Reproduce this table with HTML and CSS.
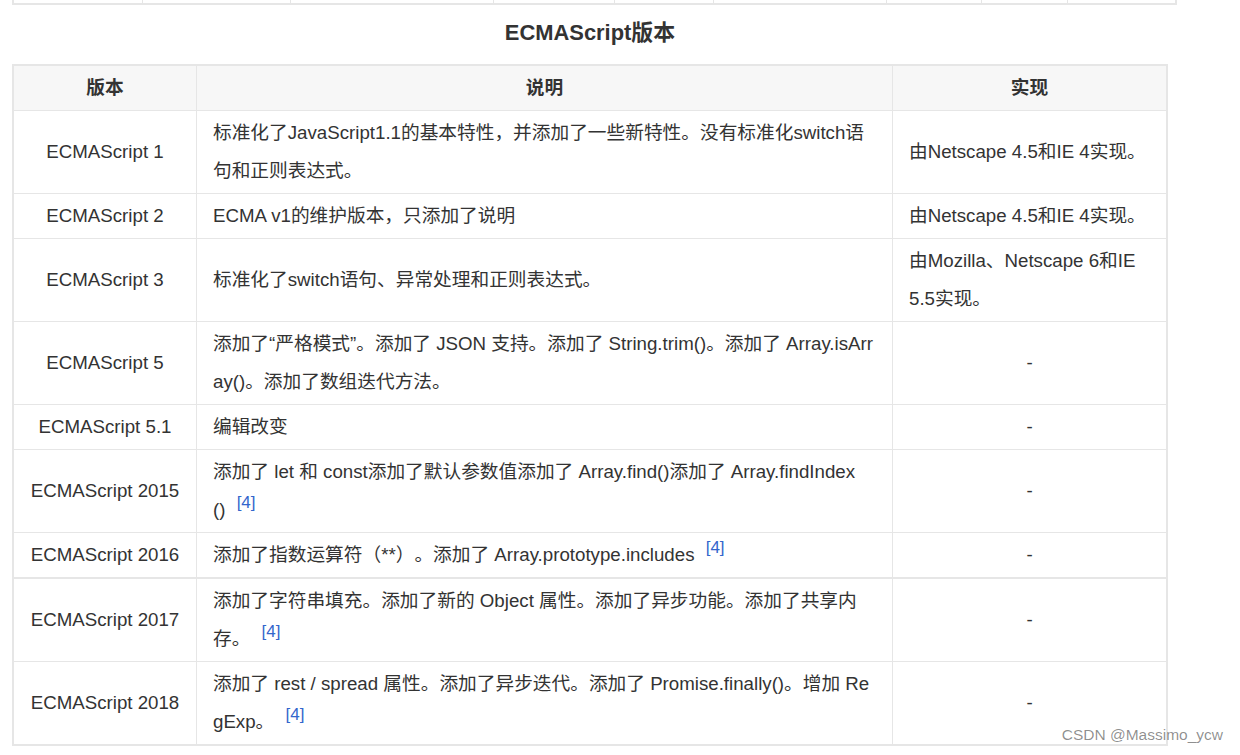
FILE: index.html
```html
<!DOCTYPE html>
<html lang="zh-CN">
<head>
<meta charset="utf-8">
<title>ECMAScript版本</title>
<link rel="stylesheet" href="styles.css">
</head>
<body>
<div class="prev-table"><span></span><span></span><span></span><span></span><span></span><span></span><span></span><span></span><span></span></div>
<h2 class="caption">ECMAScript版本</h2>
<table class="versions">
  <thead>
    <tr><th class="col-ver">版本</th><th class="col-desc">说明</th><th class="col-impl">实现</th></tr>
  </thead>
  <tbody>
    <tr><td class="ver">ECMAScript 1</td><td class="desc">标准化了JavaScript1.1的基本特性，并添加了一些新特性。没有标准化switch语句和正则表达式。</td><td class="impl">由Netscape 4.5和IE 4实现。</td></tr>
    <tr><td class="ver">ECMAScript 2</td><td class="desc">ECMA v1的维护版本，只添加了说明</td><td class="impl">由Netscape 4.5和IE 4实现。</td></tr>
    <tr><td class="ver">ECMAScript 3</td><td class="desc">标准化了switch语句、异常处理和正则表达式。</td><td class="impl">由Mozilla、Netscape 6和IE 5.5实现。</td></tr>
    <tr><td class="ver">ECMAScript 5</td><td class="desc">添加了“严格模式”。添加了 JSON 支持。添加了 String.trim()。添加了 Array.isArray()。添加了数组迭代方法。</td><td class="impl none">-</td></tr>
    <tr><td class="ver">ECMAScript 5.1</td><td class="desc">编辑改变</td><td class="impl none">-</td></tr>
    <tr><td class="ver">ECMAScript 2015</td><td class="desc">添加了 let 和 const添加了默认参数值添加了 Array.find()添加了 Array.findIndex()&nbsp;<sup class="ref">[4]</sup></td><td class="impl none">-</td></tr>
    <tr class="thick"><td class="ver">ECMAScript 2016</td><td class="desc">添加了指数运算符（**）。添加了 Array.prototype.includes&nbsp;<sup class="ref">[4]</sup></td><td class="impl none">-</td></tr>
    <tr><td class="ver">ECMAScript 2017</td><td class="desc">添加了字符串填充。添加了新的 Object 属性。添加了异步功能。添加了共享内存。&nbsp;<sup class="ref">[4]</sup></td><td class="impl none">-</td></tr>
    <tr><td class="ver">ECMAScript 2018</td><td class="desc">添加了 rest / spread 属性。添加了异步迭代。添加了 Promise.finally()。增加 RegExp。&nbsp;<sup class="ref">[4]</sup></td><td class="impl none">-</td></tr>
  </tbody>
</table>
<div class="watermark">CSDN @Massimo_ycw</div>
</body>
</html>
```

FILE: styles.css
```css
* {
  box-sizing: border-box;
}

html, body {
  margin: 0;
  background: #ffffff;
}

body {
  position: relative;
  color: #333333;
  font-family: "Liberation Sans", "Noto Sans CJK SC", sans-serif;
  font-size: 18.7px;
  text-spacing-trim: space-all;
}

.prev-table {
  display: grid;
  grid-template-columns: 129px 148px 203px 121px 99px 173px 95px 86px 107px;
  width: 1165px;
  height: 5px;
  margin-left: 12px;
  border: 2px solid #e6e6e6;
  border-top: 0;
}

.prev-table span {
  border-right: 1px solid #e6e6e6;
}

.prev-table span:last-child {
  border-right: 0;
}

.caption {
  width: 1156px;
  margin: 0 0 3px 12px;
  font-size: 21.9px;
  line-height: 56px;
  font-weight: bold;
  text-align: center;
  color: #333333;
}

.versions {
  width: 1156px;
  margin-left: 12px;
  border: 2px solid #e6e6e6;
  border-collapse: separate;
  border-spacing: 0;
  table-layout: fixed;
}

.versions th,
.versions td {
  padding: 3px 16px;
  line-height: 38px;
  border-right: 1px solid #e6e6e6;
  border-bottom: 1px solid #e6e6e6;
  vertical-align: middle;
  word-break: break-all;
  text-align: left;
  font-weight: normal;
}

.versions th:last-child,
.versions td:last-child {
  border-right: 0;
}

.versions tbody tr:last-child td {
  border-bottom: 0;
}

.versions tr.thick td {
  border-bottom-width: 2px;
}

.versions th {
  background: #f7f7f7;
  font-weight: bold;
  text-align: center;
}

.col-ver { width: 183px; }
.col-desc { width: 696px; }
.col-impl { width: 273px; }

.versions td.ver {
  padding-left: 6px;
  padding-right: 6px;
  text-align: center;
}

.versions td.none {
  text-align: center;
}

.ref {
  position: relative;
  top: -8px;
  margin-left: 6px;
  font-size: 17px;
  line-height: 1;
  vertical-align: baseline;
  color: #3366cc;
}

.watermark {
  position: absolute;
  top: 726px;
  right: 17px;
  font-family: "Liberation Sans", sans-serif;
  font-size: 15.5px;
  line-height: 18px;
  color: rgba(0, 0, 0, 0.45);
}
```
